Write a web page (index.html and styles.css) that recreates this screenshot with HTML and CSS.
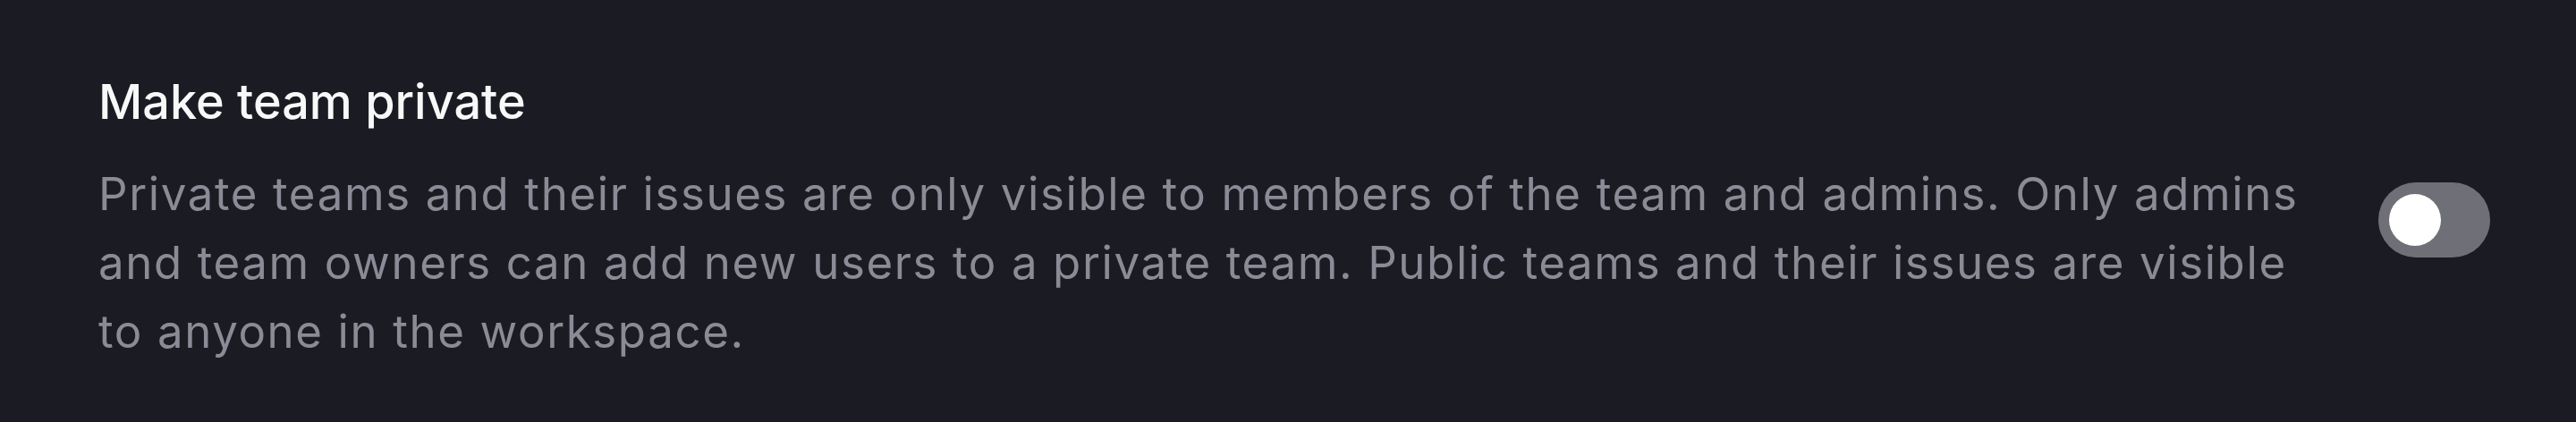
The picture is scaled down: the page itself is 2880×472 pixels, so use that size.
FILE: index.html
```html
<!DOCTYPE html>
<html lang="en">
  <head>
    <meta charset="UTF-8" />
    <meta name="viewport" content="width=device-width, initial-scale=1.0" />
    <title>Team settings</title>
    <link rel="stylesheet" href="styles.css">
  </head>
  <body>
    <section class="setting-row">
      <div class="setting-text">
        <div class="setting-title">Make team private</div>
        <p class="setting-desc">
          Private teams and their issues are only visible to members of the team and admins. Only admins
          and team owners can add new users to a private team. Public teams and their issues are visible
          to anyone in the workspace.
        </p>
      </div>
      <!-- Switch, off state -->
      <button class="switch" role="switch" aria-checked="false">
        <span class="switch-knob"></span>
      </button>
    </section>
  </body>
</html>
```

FILE: styles.css
```css
html,
body {
  margin: 0;
  padding: 0;
  width: 100%;
  height: 100%;
  background: #1b1b23;
}

body {
  font-family: Inter, "Noto Sans", sans-serif;
}

.setting-row {
  display: flex;
  align-items: center;
  gap: 70px;
  padding: 82px 96px 0 110px;
}

.setting-text {
  flex: 1;
  min-width: 0;
}

.setting-title {
  font-size: 54px;
  line-height: 64px;
  font-weight: 500;
  color: #f7f8f8;
}

.setting-desc {
  margin: 32px 0 0;
  font-size: 51px;
  line-height: 77px;
  letter-spacing: 1.6px;
  color: #8a8b96;
}

.switch {
  position: relative;
  flex: 0 0 auto;
  width: 125px;
  height: 84px;
  padding: 0;
  border: none;
  border-radius: 42px;
  background: #6f7077;
  cursor: pointer;
}

.switch-knob {
  position: absolute;
  top: 13px;
  left: 12px;
  width: 58px;
  height: 58px;
  border-radius: 50%;
  background: #fff;
}
```
